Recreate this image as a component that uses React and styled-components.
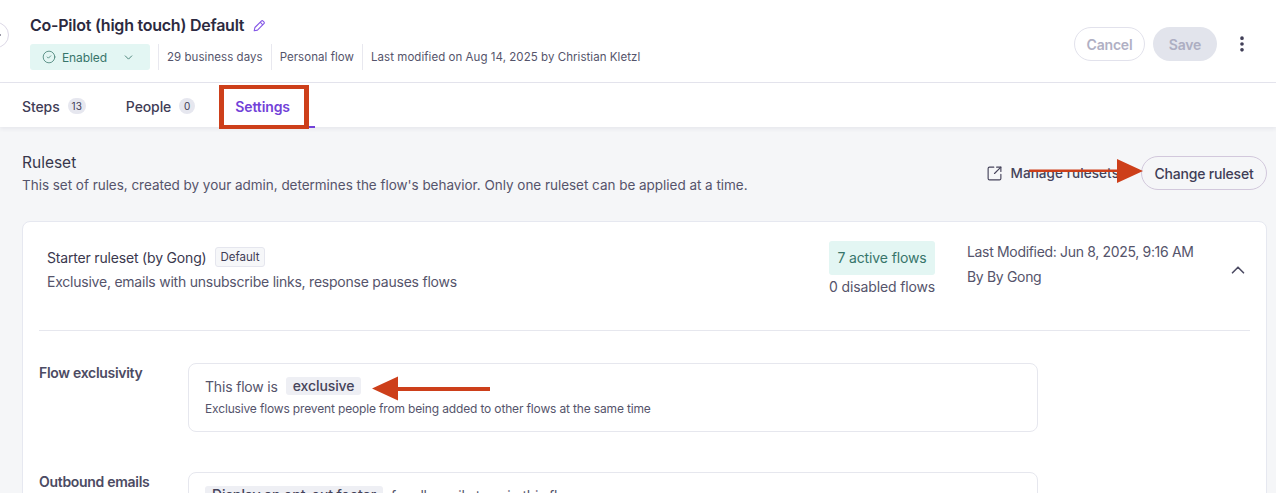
import styled, { createGlobalStyle } from 'styled-components';
import { CircleCheck, ChevronDown, ChevronUp, ChevronLeft, ChevronRight, EllipsisVertical, SquareArrowOutUpRight } from 'lucide-react';

const GlobalStyle = createGlobalStyle`
    html, body {
        margin: 0;
        height: 100%;
        overflow: hidden;
        background: #f5f6f8;
        font-family: "Inter", "Liberation Sans", sans-serif;
        color: #3f3d56;
    }
    * { box-sizing: border-box; }
`;

function PenIcon() {
    return (
        <svg width="13" height="13" viewBox="0 0 13 13" fill="none" stroke="#8457e6" strokeWidth="1.1" strokeLinejoin="round">
            <path d="M1.2 11.8l.7-3.3 6.4-6.4a1.3 1.3 0 0 1 1.8 0l.8.8a1.3 1.3 0 0 1 0 1.8L4.5 11.1z" />
            <path d="M7.2 3.2l2.6 2.6" />
        </svg>
    );
}

export default function App() {
    return (
        <Page>
            <GlobalStyle />
            <CollapseButton>
                <ChevronLeft size={10} strokeWidth={2.6} />
                <ChevronRight size={10} strokeWidth={2.6} />
            </CollapseButton>
            <Header>
                <div>
                    <TitleRow>
                        <Title>Co-Pilot (high touch) Default</Title>
                        <PenIcon />
                    </TitleRow>
                    <MetaRow>
                        <StatusChip>
                            <CircleCheck size={14} strokeWidth={1.3} />
                            <StatusLabel>Enabled</StatusLabel>
                            <ChevronDown size={13} strokeWidth={1.6} />
                        </StatusChip>
                        <MetaItem>29 business days</MetaItem>
                        <MetaItem>Personal flow</MetaItem>
                        <MetaItem>Last modified on Aug 14, 2025 by Christian Kletzl</MetaItem>
                    </MetaRow>
                </div>
                <Actions>
                    <CancelButton>Cancel</CancelButton>
                    <SaveButton>Save</SaveButton>
                    <MoreIcon>
                        <EllipsisVertical size={20} strokeWidth={2.4} />
                    </MoreIcon>
                </Actions>
            </Header>
            <Tabs>
                <Tab>Steps<Count>13</Count></Tab>
                <Tab>People<Count>0</Count></Tab>
                <Tab $active>Settings</Tab>
            </Tabs>
            <Body>
                <SectionHead>
                    <div>
                        <SectionTitle>Ruleset</SectionTitle>
                        <SectionDesc>This set of rules, created by your admin, determines the flow's behavior. Only one ruleset can be applied at a time.</SectionDesc>
                    </div>
                    <SectionActions>
                        <ManageLink>
                            <SquareArrowOutUpRight size={17} strokeWidth={1.6} />
                            Manage rulesets
                        </ManageLink>
                        <ChangeButton>Change ruleset</ChangeButton>
                    </SectionActions>
                </SectionHead>
                <Card>
                    <CardTop>
                        <CardInfo>
                            <NameRow>
                                <CardName>Starter ruleset (by Gong)</CardName>
                                <DefaultTag>Default</DefaultTag>
                            </NameRow>
                            <CardDesc>Exclusive, emails with unsubscribe links, response pauses flows</CardDesc>
                        </CardInfo>
                        <FlowStats>
                            <ActiveFlows>7 active flows</ActiveFlows>
                            <DisabledFlows>0 disabled flows</DisabledFlows>
                        </FlowStats>
                        <Modified>
                            <div>Last Modified: Jun 8, 2025, 9:16 AM</div>
                            <div>By By Gong</div>
                        </Modified>
                        <ChevronUp size={22} strokeWidth={1.8} />
                    </CardTop>
                    <Divider />
                    <RuleRow>
                        <RuleLabel>Flow exclusivity</RuleLabel>
                        <RuleBox>
                            <RuleLine>This flow is<Keyword>exclusive</Keyword></RuleLine>
                            <RuleNote>Exclusive flows prevent people from being added to other flows at the same time</RuleNote>
                        </RuleBox>
                    </RuleRow>
                    <RuleRow>
                        <RuleLabel>Outbound emails</RuleLabel>
                        <RuleBox>
                            <RuleLine><Keyword $first>Display an opt-out footer</Keyword>for all email steps in this flow</RuleLine>
                        </RuleBox>
                    </RuleRow>
                </Card>
            </Body>

            <TabMark />
            <Highlight />
            <Annotation width="1276" height="493" viewBox="0 0 1276 493">
                <path d="M1029 169.5h88v-10.500l26 12-26 12v-11h-88z" fill="#cd3f1a" />
                <path d="M490 387h-92v-10.500l-26 12 26 12v-9.500h92z" fill="#cd3f1a" />
            </Annotation>
        </Page>
    );
}

const Page = styled.div`
    position: relative;
    width: 1276px;
    height: 493px;
    overflow: hidden;
`;

const CollapseButton = styled.div`
    position: absolute;
    left: -17px;
    top: 22px;
    width: 26px;
    height: 26px;
    padding-right: 2px;
    border-radius: 50%;
    border: 1px solid #dcd8e6;
    background: #fff;
    display: flex;
    align-items: center;
    justify-content: center;
    color: #3f3d56;
    z-index: 2;
    svg { margin: 0 -1px; flex: none; }
`;

const Header = styled.header`
    height: 83px;
    background: #fff;
    border-bottom: 1px solid #e5e5ee;
    padding: 15px 24px 0 30px;
    display: flex;
    justify-content: space-between;
`;

const TitleRow = styled.div`
    display: flex;
    align-items: center;
    gap: 9px;
    height: 21px;
`;

const Title = styled.h1`
    margin: 0;
    font-size: 16px;
    line-height: 21px;
    font-weight: 600;
    letter-spacing: -0.24px;
    color: #2c2a40;
`;

const MetaRow = styled.div`
    display: flex;
    align-items: center;
    margin-top: 8px;
    height: 26px;
`;

const StatusChip = styled.div`
    width: 120px;
    height: 26px;
    border-radius: 3px;
    background: #e3f6f3;
    color: #37756a;
    display: flex;
    align-items: center;
    padding: 0 15px 0 12px;
    font-size: 12px;
    margin-right: 8px;
`;

const StatusLabel = styled.span`
    margin-left: 6px;
    flex: 1;
    letter-spacing: -0.1px;
`;

const MetaItem = styled.span`
    height: 26px;
    line-height: 26px;
    font-size: 11.5px;
    letter-spacing: 0.05px;
    color: #55546b;
    padding: 0 8px;
    border-left: 1px solid #e8e8ef;
`;

const Actions = styled.div`
    display: flex;
    align-items: center;
    height: 58px;
`;

const CancelButton = styled.button`
    width: 71px;
    height: 34px;
    border-radius: 17px;
    border: 1px solid #e2e2ec;
    background: #fff;
    color: #b0b0c4;
    font: 600 14px "Inter", sans-serif;
    letter-spacing: -0.2px;
    padding: 0;
`;

const SaveButton = styled.button`
    width: 64px;
    height: 34px;
    margin-left: 8px;
    border-radius: 17px;
    border: none;
    background: #e2e4ec;
    color: #adaec2;
    font: 600 14px "Inter", sans-serif;
    letter-spacing: -0.2px;
    padding: 0;
`;

const MoreIcon = styled.span`
    display: flex;
    margin-left: 15px;
    color: #3f3d56;
`;

const Tabs = styled.nav`
    height: 44px;
    background: #fff;
    box-shadow: 0 2px 4px rgba(40, 40, 80, 0.07);
    padding-left: 22px;
    display: flex;
    gap: 40px;
    position: relative;
`;

const Tab = styled.div`
    display: flex;
    align-items: center;
    height: 44px;
    padding-top: 2px;
    font-size: 14px;
    font-weight: ${p => (p.$active ? 600 : 500)};
    letter-spacing: -0.1px;
    color: ${p => (p.$active ? '#7242d8' : '#3f3d56')};
`;

const Count = styled.span`
    margin-left: 8px;
    min-width: 16px;
    height: 16px;
    padding: 0 4px;
    border-radius: 8px;
    background: #e6e7ef;
    color: #3f3d56;
    font-size: 10px;
    font-weight: 400;
    letter-spacing: 0;
    line-height: 16px;
    text-align: center;
`;

const TabMark = styled.div`
    position: absolute;
    left: 307px;
    top: 126px;
    width: 8px;
    height: 2px;
    background: #7242d8;
`;

const Highlight = styled.div`
    position: absolute;
    left: 219px;
    top: 85px;
    width: 90px;
    height: 44px;
    border: 4px solid #cd3f1a;
    border-left-width: 5px;
    border-right-width: 5px;
    pointer-events: none;
    z-index: 3;
`;

const Body = styled.main`
    padding: 26px 9px 0 22px;
`;

const SectionHead = styled.div`
    display: flex;
    justify-content: space-between;
    align-items: flex-start;
`;

const SectionTitle = styled.h2`
    margin: 0;
    font-size: 15.5px;
    line-height: 19px;
    font-weight: 400;
    color: #38364c;
`;

const SectionDesc = styled.p`
    margin: 4px 0 0;
    font-size: 13.5px;
    line-height: 19px;
    letter-spacing: -0.03px;
    color: #55546b;
`;

const SectionActions = styled.div`
    display: flex;
    align-items: center;
    margin-top: 3px;
`;

const ManageLink = styled.span`
    display: flex;
    align-items: center;
    gap: 8px;
    font-size: 13.5px;
    font-weight: 500;
    letter-spacing: 0.08px;
    color: #45435a;
    margin-right: 22px;
`;

const ChangeButton = styled.button`
    width: 126px;
    height: 34px;
    border-radius: 17px;
    border: 1px solid #d2c8dc;
    background: transparent;
    color: #3f3d56;
    font: 500 14px "Inter", sans-serif;
    letter-spacing: -0.2px;
    padding: 0;
`;

const Card = styled.section`
    margin-top: 26px;
    height: 400px;
    background: #fff;
    border: 1px solid #e6e8f0;
    border-radius: 8px;
    padding: 0 16px;
`;

const CardTop = styled.div`
    display: flex;
    align-items: flex-start;
    height: 108px;
    color: #4c4b63;
    padding-left: 8px;
    svg { margin: 37px 1px 0 0; flex: none; }
`;

const CardInfo = styled.div`
    flex: 1;
    padding-top: 24px;
`;

const NameRow = styled.div`
    display: flex;
    align-items: center;
    gap: 9px;
    height: 22px;
`;

const CardName = styled.span`
    font-size: 14px;
    letter-spacing: -0.18px;
    color: #3a384e;
`;

const DefaultTag = styled.span`
    height: 20px;
    line-height: 18px;
    padding: 0 4px;
    border: 1px solid #e5e6ee;
    border-radius: 3px;
    background: #f6f7f9;
    font-size: 11.5px;
    color: #3f3d56;
`;

const CardDesc = styled.p`
    margin: 3px 0 0;
    font-size: 14px;
    line-height: 21px;
    letter-spacing: -0.23px;
    color: #55546b;
`;

const FlowStats = styled.div`
    width: 106px;
    margin-top: 19px;
    margin-right: 32px;
    font-size: 14px;
    letter-spacing: -0.13px;
`;

const ActiveFlows = styled.div`
    height: 34px;
    line-height: 34px;
    border-radius: 3px;
    background: #e3f6f3;
    color: #37756a;
    text-align: center;
`;

const DisabledFlows = styled.div`
    line-height: 20px;
    margin-top: 2px;
    color: #55546b;
    white-space: nowrap;
`;

const Modified = styled.div`
    width: 260px;
    margin-top: 17px;
    font-size: 14px;
    line-height: 25px;
    letter-spacing: -0.33px;
    color: #55546b;
`;

const Divider = styled.div`
    height: 1px;
    background: #e6e7ee;
`;

const RuleRow = styled.div`
    display: flex;
    align-items: flex-start;
    padding-top: 32px;
    &:nth-of-type(n + 4) { padding-top: 40px; }
`;

const RuleLabel = styled.div`
    width: 149px;
    flex: none;
    font-size: 14px;
    line-height: 20px;
    font-weight: 600;
    letter-spacing: -0.3px;
    color: #4c4b63;
`;

const RuleBox = styled.div`
    width: 850px;
    min-height: 69px;
    border: 1px solid #e6e7ee;
    border-radius: 8px;
    padding: 12px 16px;
`;

const RuleLine = styled.div`
    display: flex;
    align-items: center;
    height: 20px;
    font-size: 14px;
    letter-spacing: -0.18px;
    color: #55546b;
`;

const Keyword = styled.span`
    margin-left: ${p => (p.$first ? 0 : '8px')};
    margin-right: ${p => (p.$first ? '8px' : 0)};
    height: 18px;
    line-height: 18px;
    padding: 0 7px;
    border-radius: 3px;
    background: #eeeff4;
    font-weight: 500;
    font-size: 14px;
    letter-spacing: -0.1px;
    color: #45435a;
`;

const RuleNote = styled.div`
    margin-top: 5px;
    font-size: 12px;
    line-height: 16px;
    letter-spacing: -0.155px;
    color: #55546b;
`;

const Annotation = styled.svg`
    position: absolute;
    inset: 0;
    pointer-events: none;
    z-index: 3;
`;
